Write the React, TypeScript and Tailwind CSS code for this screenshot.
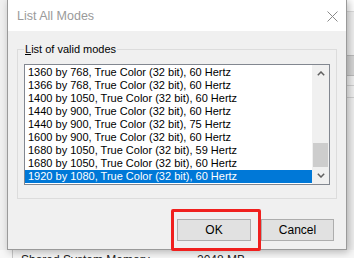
import React from "react";

const modes = [
  "1360 by 768, True Color (32 bit), 60 Hertz",
  "1366 by 768, True Color (32 bit), 60 Hertz",
  "1400 by 1050, True Color (32 bit), 60 Hertz",
  "1440 by 900, True Color (32 bit), 60 Hertz",
  "1440 by 900, True Color (32 bit), 75 Hertz",
  "1600 by 900, True Color (32 bit), 60 Hertz",
  "1680 by 1050, True Color (32 bit), 59 Hertz",
  "1680 by 1050, True Color (32 bit), 60 Hertz",
  "1920 by 1080, True Color (32 bit), 60 Hertz",
];

const uiFont = { fontFamily: '"Liberation Sans", Arial, sans-serif' };

function Chevron({ up }: { up?: boolean }) {
  return (
    <svg width="8" height="5" viewBox="0 0 8 5">
      <path
        d={up ? "M0.8 4.2 L4 1 L7.2 4.2" : "M0.8 0.8 L4 4 L7.2 0.8"}
        fill="none"
        stroke="#606060"
        strokeWidth="1.5"
      />
    </svg>
  );
}

export default function App() {
  const selected = modes.length - 1;

  return (
    <div className="relative w-[354px] h-[258px] overflow-hidden bg-[#f7f7f7] text-black" style={uiFont}>
      {/* page behind the dialog */}
      <div className="flex flex-col h-full">
        <div className="flex h-[250px] shrink-0">
          <div className="flex-1 bg-[#f0f0f0]" />
          <div className="w-[8px] flex flex-col bg-[#f0f0f0]">
            <div className="h-[12px] bg-white border-b border-[#dcdcdc]" />
            <div className="h-[43px]" />
            <div className="h-[21px] bg-[#d6d6d6] border-y border-[#bcbcbc]" />
            <div className="h-[9px]" />
            <div className="h-[12px] border-t border-[#d0d0d0]" />
            <div className="border-t border-[#d0d0d0]" />
          </div>
        </div>
        <div className="flex flex-1 min-h-0 pl-[12px]">
          <div className="flex flex-1 border-l border-[#c8c8c8] pl-[8px] pt-[3px] text-[12px] leading-[14px] text-[#222]">
            <span className="w-[176px]">Shared System Memory</span>
            <span>2048 MB</span>
          </div>
        </div>
      </div>

      {/* dialog window */}
      <div className="absolute left-[7px] top-[-1px] w-[340px] h-[251px] flex flex-col border border-[#9a9a9a] bg-[#f0f0f0] shadow-[2px_2px_8px_rgba(0,0,0,0.28)]">
        <div className="h-[31px] bg-white flex items-center justify-between pl-[9px] pr-[8px] pt-[1px]">
          <span className="text-[12.5px] text-[#9a9a9a]">List All Modes</span>
          <svg width="11" height="11" viewBox="0 0 11 11">
            <path d="M0.5 0.5 L10.5 10.5 M10.5 0.5 L0.5 10.5" stroke="#8a8a8a" strokeWidth="1" />
          </svg>
        </div>

        <div className="flex-1 flex flex-col px-[9px] pt-[11px]">
          <fieldset className="border border-[#dcdcdc] pl-[6px] pr-[6px] pb-[13px]">
            <legend className="px-[1px] text-[11px] leading-[14px] text-black">
              <span className="underline">L</span>ist of valid modes
            </legend>
            <div className="mt-[8px] h-[121px] flex border border-[#828790] bg-white">
              <div className="flex-1 py-[1px] text-[11px] leading-[13px] whitespace-nowrap overflow-hidden">
                {modes.map((m, i) => (
                  <div
                    key={m}
                    className={`h-[13px] pl-[3px] ${i === selected ? "bg-[#0078d7] text-white" : "text-black"}`}
                  >
                    {m}
                  </div>
                ))}
              </div>
              <div className="w-[17px] flex flex-col bg-[#f0f0f0]">
                <div className="h-[17px] flex items-center justify-center">
                  <Chevron up />
                </div>
                <div className="flex-1" />
                <div className="h-[24px] mx-[1px] bg-[#cdcdcd]" />
                <div className="h-[17px] flex items-center justify-center">
                  <Chevron />
                </div>
              </div>
            </div>
          </fieldset>

          <div className="flex justify-end gap-[10px] mt-[20px] pr-[3px]">
            <button className="w-[74px] h-[22px] bg-[#e1e1e1] border border-[#adadad] text-[12px]">OK</button>
            <button className="w-[73px] h-[22px] bg-[#e1e1e1] border border-[#adadad] text-[12px]">Cancel</button>
          </div>
        </div>
      </div>

      {/* red highlight annotation */}
      <div className="absolute left-[171px] top-[209px] w-[90px] h-[42px] border-[3px] border-[#f0201e] rounded-[2px]" />
    </div>
  );
}
